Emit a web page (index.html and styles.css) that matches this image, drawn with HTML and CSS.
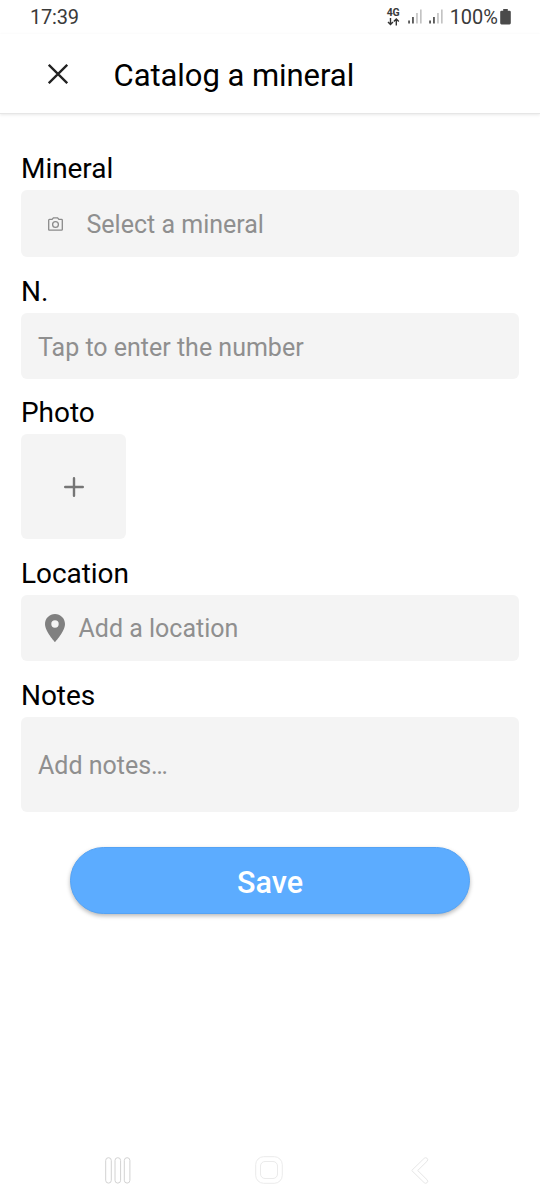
FILE: index.html
```html
<!DOCTYPE html>
<html lang="en">
<head>
<meta charset="utf-8">
<title>Catalog a mineral</title>
<link rel="stylesheet" href="styles.css">
</head>
<body>
<div class="screen">
  <div class="status">
    <span class="clock">17:39</span>
    <div class="network">
      <span class="network-type">4G</span>
      <svg class="arrows" width="13" height="8" viewBox="0 0 13 8" fill="none" stroke="#333" stroke-width="1.4"><path d="M3.5 0v6.2M1 3.9l2.500 2.500L6 3.900M9.300 7.400V1.200M6.800 3.500L9.300 1l2.500 2.500"/></svg>
    </div>
    <svg class="signal" width="14" height="16" viewBox="0 0 14 16"><path fill="#333" d="M.3 11.500h1.500v3H.3zM4.200 8h1.500v6.500H4.200z"/><path fill="#bdbdbd" d="M8.200 4h1.500v10.500H8.200zM12.100.500h1.500v14h-1.500z"/></svg>
    <svg class="signal" width="14" height="16" viewBox="0 0 14 16"><path fill="#333" d="M.3 11.500h1.500v3H.3zM4.200 8h1.500v6.500H4.200z"/><path fill="#bdbdbd" d="M8.200 4h1.500v10.500H8.200zM12.100.500h1.500v14h-1.500z"/></svg>
    <span class="percent">100%</span>
    <svg class="battery" width="11" height="16" viewBox="0 0 11 16"><path fill="#4a4a4a" d="M3.200 0h4.600v1.800h1.700q1.300 0 1.300 1.300v11q0 1.400-1.300 1.400h-8Q.2 15.500.2 14.100V3.100Q.2 1.800 1.500 1.800h1.700z"/></svg>
  </div>
  <header class="header">
    <svg class="close" width="20" height="20" viewBox="0 0 20 20" fill="none" stroke="#222" stroke-width="2.300"><path d="M.8.800l18.400 18.400M19.200.800L.8 19.200"/></svg>
    <h1 class="title">Catalog a mineral</h1>
  </header>
  <main class="form">
    <div class="group">
      <div class="label">Mineral</div>
      <div class="field mineral">
        <svg class="camera" width="15" height="14" viewBox="0 0 15 14" fill="none" stroke="#8a8a8a" stroke-width="1.300"><path d="M1.500 2.400h2.600L5.400.800h4.200l1.300 1.600h2.600q.8 0 .8.800v9.200q0 .8-.8.800h-12q-.8 0-.8-.8V3.200q0-.8.8-.8z"/><circle cx="7.500" cy="7.500" r="2.900"/></svg>
        <span class="hint">Select a mineral</span>
      </div>
    </div>
    <div class="group">
      <div class="label">N.</div>
      <div class="field number"><span class="hint">Tap to enter the number</span></div>
    </div>
    <div class="group photo-group">
      <div class="label">Photo</div>
      <div class="field photo"><svg width="20" height="20" viewBox="0 0 20 20" fill="none" stroke="#757575" stroke-width="2.400" stroke-linecap="round"><path d="M10 1.200v17.600M1.200 10h17.600"/></svg></div>
    </div>
    <div class="group">
      <div class="label">Location</div>
      <div class="field location">
        <svg class="pin" width="20" height="28" viewBox="0 0 20 28"><path fill="#808080" fill-rule="evenodd" d="M10 0C4.500 0 0 4.400 0 9.900 0 17.300 10 28 10 28s10-10.700 10-18.100C20 4.400 15.500 0 10 0zm0 6.300a3.700 3.700 0 1 1 0 7.400 3.700 3.700 0 0 1 0-7.400z"/></svg>
        <span class="hint">Add a location</span>
      </div>
    </div>
    <div class="group">
      <div class="label">Notes</div>
      <div class="field notes"><span class="hint">Add notes…</span></div>
    </div>
    <button class="save">Save</button>
  </main>
  <nav class="nav">
    <svg width="26" height="27" viewBox="0 0 26 27" fill="none" stroke="#d2d2d2"><rect x=".7" y=".7" width="5.600" height="25.400" rx="2.800"/><rect x="10" y=".7" width="5.600" height="25.400" rx="2.800"/><rect x="19.300" y=".7" width="5.600" height="25.400" rx="2.800"/></svg>
    <svg class="home" width="28" height="28" viewBox="0 0 28 28" fill="none" stroke="#ebebeb"><rect x=".7" y=".7" width="26.600" height="26.600" rx="8"/><rect x="5.500" y="5.500" width="17" height="17" rx="4.500"/></svg>
    <svg width="18" height="27" viewBox="0 0 18 27" fill="none" stroke="#e6e6e6"><path d="M.7 13.500L13.200 1.300q1.500-1.200 2.900 0 1.300 1.400 0 2.900L6.700 13.500l9.400 9.300q1.300 1.500 0 2.900-1.400 1.200-2.900 0z"/></svg>
  </nav>
</div>
</body>
</html>
```
FILE: styles.css
```css
* { box-sizing: border-box; }
body { margin: 0; background: #fff; font-family: Roboto, sans-serif; }
svg { display: block; flex: none; }
.screen { width: 540px; height: 1204px; display: flex; flex-direction: column; overflow: hidden; }
.status { height: 34px; padding: 0 29px 0 30px; display: flex; align-items: center; color: #3a3a3a; font-size: 20px; line-height: 34px; }
.clock { margin-right: auto; letter-spacing: -0.2px; }
.network { width: 14px; margin-right: 7px; }
.network-type { display: block; font-size: 10.5px; font-weight: 700; line-height: 9px; letter-spacing: -0.2px; }
.arrows { margin-top: 1px; }
.signal { margin-right: 6px; }
.network + .signal { margin-left: 0; margin-right: 7px; }
.percent { margin-left: 1px; margin-right: 2px; }
.header { height: 80px; display: flex; align-items: center; padding-left: 47.5px; gap: 46px; border-bottom: 1px solid #e6e6e6; box-shadow: 0 1px 3px rgba(0,0,0,.09); }
.title { margin: 0; padding-top: 4px; font-size: 31px; font-weight: 400; line-height: 40px; letter-spacing: -0.05px; color: #000; }
.form { padding: 38px 21px 0; display: flex; flex-direction: column; gap: 18px; }
.group { display: flex; flex-direction: column; gap: 4px; }
.photo-group { margin-top: -1px; }
.label { font-size: 28px; line-height: 34px; letter-spacing: -0.05px; color: #000; }
.field { height: 66px; border-radius: 6px; background: #f4f4f4; display: flex; align-items: center; padding-left: 17px; }
.hint { padding-top: 2px; font-size: 25px; line-height: 32px; color: #8f8f8f; }
.mineral { height: 67px; padding-left: 26.5px; gap: 24px; }
.number .hint { padding-top: 4px; }
.photo { width: 105px; height: 105px; justify-content: center; padding: 0; }
.location { padding-left: 23.500px; gap: 14px; }
.notes { height: 95px; }
.save { width: 400px; height: 67px; margin: 17px auto 0; border: 1px solid #54a3f5; border-radius: 34px; background: #5cacff; color: #fff; font: 500 30.5px/40px Roboto, sans-serif; padding: 4px 0 0; box-shadow: 0 2px 4px rgba(0,0,0,.28); }
.nav { margin-top: auto; height: 48px; margin-bottom: 10px; padding: 0 111px 0 105px; display: flex; align-items: center; justify-content: space-between; }
.home { margin-right: 5px; }
```
